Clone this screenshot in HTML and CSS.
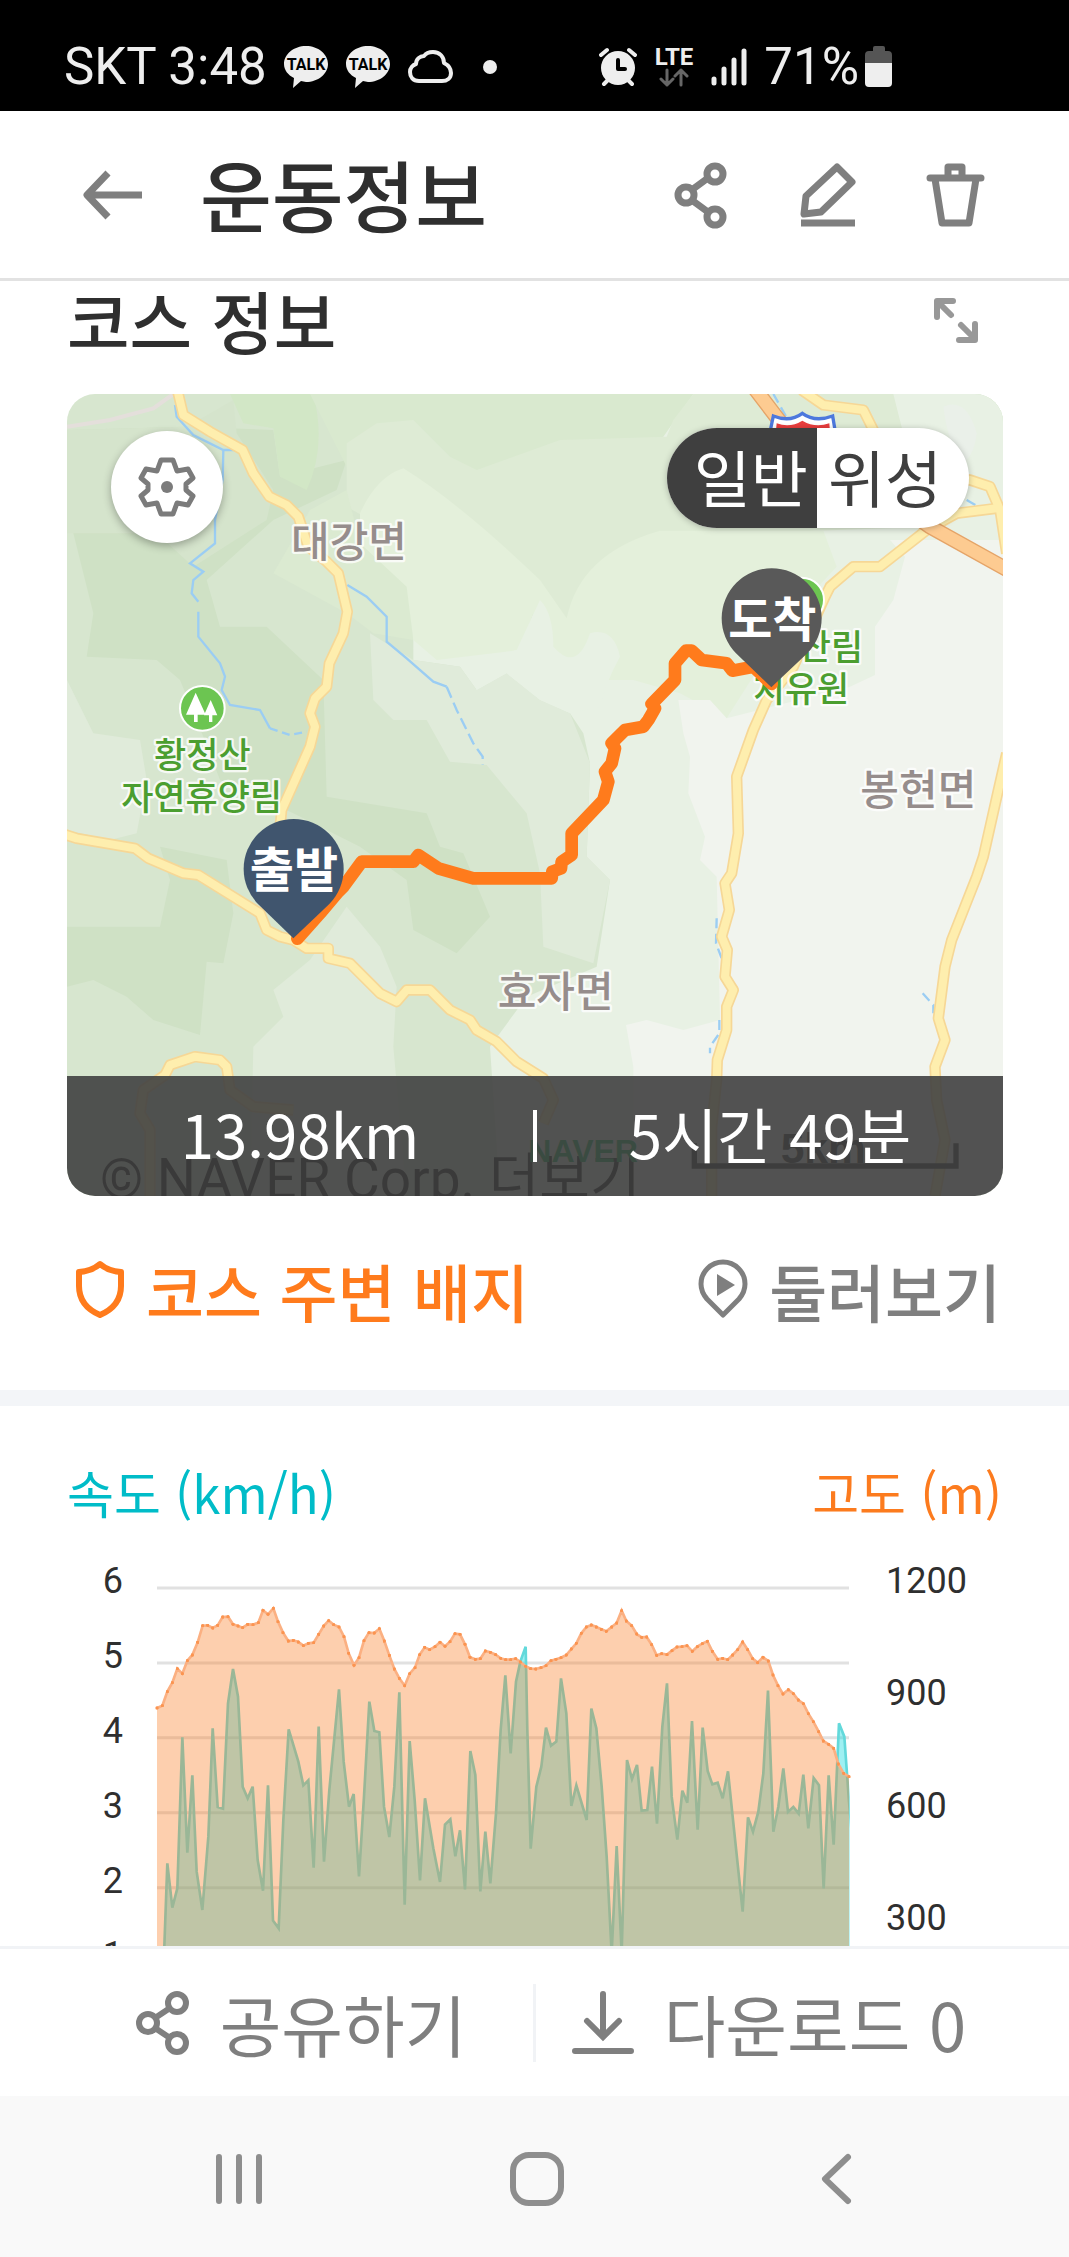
FILE: index.html
```html
<!DOCTYPE html>
<html lang="ko">
<head>
    <meta charset="UTF-8">
    <meta name="viewport" content="width=device-width, initial-scale=1.0">
    <title>운동정보</title>
    <link rel="stylesheet" href="styles.css">
</head>
<body>
    <div class="statusbar">
        <div class="status-group">
            <span>SKT 3:48</span>
            <svg class="talk" width="45" height="42" viewBox="0 0 45 42">
                <path fill="#eee" d="M22 0C34 0 44 8 44 18S34 36 22 36l-5-1-8 7 1-10C4 29 0 24 0 18 0 8 10 0 22 0z"/>
                <text x="22" y="24">TALK</text>
            </svg>
            <svg class="talk" width="45" height="42" viewBox="0 0 45 42">
                <path fill="#eee" d="M22 0C34 0 44 8 44 18S34 36 22 36l-5-1-8 7 1-10C4 29 0 24 0 18 0 8 10 0 22 0z"/>
                <text x="22" y="24">TALK</text>
            </svg>
            <svg width="45" height="34" viewBox="0 0 45 34">
                <path fill="none" stroke="#eee" stroke-width="4" stroke-linejoin="round" d="M11 31C5 31 2 27 2 22c0-4 3-7 6-8 0-5 4-8 8-8C18 3 21 2 25 2c7 0 11 5 11 11 4 2 7 5 7 10s-4 8-9 8z"/>
            </svg>
            <span class="dot"></span>
        </div>
        <div class="status-group">
            <svg width="38" height="40" viewBox="0 0 38 40">
                <path stroke="#eee" stroke-width="4" stroke-linecap="round" d="M2 8l6-5M36 8l-6-5M8 34l-3 3M30 34l3 3"/>
                <circle cx="19" cy="21" r="17" fill="#eee"/>
                <path fill="none" stroke="#000" stroke-width="4" stroke-linecap="round" stroke-linejoin="round" d="M19 13v9h7"/>
            </svg>
            <svg class="lte" width="40" height="40" viewBox="0 0 40 40">
                <text x="20" y="18">LTE</text>
                <path fill="none" stroke="#666" stroke-width="3" stroke-linecap="round" stroke-linejoin="round" d="M13 23v15M7 32l6 6 6-6M27 38V23M21 29l6-6 6 6"/>
            </svg>
            <svg width="36" height="38" viewBox="0 0 36 38">
                <path stroke="#eee" stroke-width="5" stroke-linecap="round" d="M3 31v4M13 21v14M23 12v23M33 3v32"/>
            </svg>
            <span class="battery">
                <span>71%</span>
                <svg width="27" height="41" viewBox="0 0 27 41">
                    <path fill="#555" d="M0 17V9q0-4 4-4h4V2q0-2 2-2h8q2 0 2 2v3h3q4 0 4 4v8z"/>
                    <path fill="#eee" d="M0 17h27v20q0 4-4 4H4q-4 0-4-4z"/>
                </svg>
            </span>
        </div>
    </div>

    <header class="header">
        <button class="icon-button" aria-label="뒤로">
            <svg width="72" height="72" viewBox="0 0 72 72">
                <path d="M66 36H11M32 14L11 36l21 22"/>
            </svg>
        </button>
        <h1>운동정보</h1>
        <div class="header-actions">
            <button class="icon-button" aria-label="공유">
                <svg width="72" height="72" viewBox="0 0 72 72">
                    <circle cx="21" cy="36" r="8"/>
                    <circle cx="50" cy="15" r="8"/>
                    <circle cx="50" cy="58" r="8"/>
                    <path d="M28 30l15-11M28 42l15 11"/>
                </svg>
            </button>
            <button class="icon-button" aria-label="수정">
                <svg width="72" height="72" viewBox="0 0 72 72">
                    <path d="M45 8l15 15-31 30-17 2 2-18z"/>
                    <path d="M9 64h54"/>
                </svg>
            </button>
            <button class="icon-button" aria-label="삭제">
                <svg width="72" height="72" viewBox="0 0 72 72">
                    <path stroke-linecap="round" d="M11 19h51M29 18V8h14v10M16 20l7 44h27l7-44"/>
                </svg>
            </button>
        </div>
    </header>

    <main>
        <section>
            <div class="section-title">
                <h2>코스 정보</h2>
                <button class="icon-button expand" aria-label="확대">
                    <svg width="46" height="46" viewBox="0 0 46 46">
                        <path stroke-linecap="round" d="M4 20V4h16M5 5l13 13M26 43h16V27M41 41L28 28"/>
                    </svg>
                </button>
            </div>

            <div class="map">
                <svg class="map-canvas" viewBox="21 42 2808 2406" preserveAspectRatio="xMidYMid slice">
                    <rect x="21" y="42" width="2808" height="2406" fill="#d7e6cf"/>
                    <!-- terrain -->
                    <path fill="#cfe1c5" d="M21 150L380 140 640 150 660 290 860 240 830 330 640 420 440 600 480 740 620 740 790 900 800 1250 1100 1300 1140 1400 1210 1420 1290 1610 1190 1720 1060 1650 1040 1500 900 1400 700 1300 480 1200 430 1070 360 900 290 840 80 830 100 700 40 460z"/>
                    <path fill="#d5e4cc" d="M21 150L380 140 520 60 530 160 640 330 620 420 400 560 290 460 21 460z"/>
                    <path fill="#cfe1c5" d="M21 1640H300L330 1500 300 1400 500 1440 520 1600 490 1750 440 1745 420 1965 280 1920 200 1850 100 1800 21 1820z"/>
                    <path fill="#e0ebda" d="M21 900L100 1060 240 1080 260 1200 230 1360 150 1380 21 1350z"/>
                    <path fill="#e0ebda" d="M640 1830L750 1740 860 1580 960 1700 1010 1820 1000 2000 1040 2448H570L580 2000 670 1910z"/>
                    <path fill="#d2e7c6" d="M510 42H760Q800 200 740 330L660 290 640 145 550 130z"/>
                    <path fill="#d9e9cf" d="M750 42H2829V600H1400L1250 450 860 260z"/>
                    <path fill="#e8f1e4" d="M1420 700L1380 810 1060 770V840L1200 860 1250 930 1340 880 1440 960 1530 1000 1570 1060 1590 1150 1580 1430 1650 1500 1610 1760 1400 1850 1290 2000 1320 2448H2829V42H1900L1810 170z"/>
                    <path fill="#deebd5" d="M860 380L860 190 950 130 1060 120 1170 230 1250 270 1500 180 1820 170 1840 120 1900 42H2500L2600 440 1800 470 1600 570 1520 715 1250 600z"/>
                    <path fill="#e0ebda" d="M930 760L940 960 1000 1020 1100 1020 1170 1145 1280 1155 1400 1300 1440 1480 1450 1700 1600 1750 1650 1500 1580 1430 1590 1150 1530 1000 1440 960 1340 880 1250 930 1200 860 1060 840z"/>
                    <path fill="#dbead1" d="M640 580L750 390 860 330 900 490 1040 600 1060 780 940 760 860 700z"/>
                    <path fill="#e4f0db" d="M900 400Q950 290 1030 265 1200 370 1440 600L1520 715Q1560 520 1800 452H2290L2330 560 2200 700 2000 1015 1860 940 1720 900 1600 900 1480 860 1420 700 1380 810 1130 840 1060 780 1040 620 900 490z"/>
                    <path fill="#e8f1e4" d="M1440 660Q1480 700 1480 800 1550 880 1590 760 1660 740 1680 830 1640 900 1620 980L1530 1000 1440 960 1340 880 1250 930 1210 840 1370 810z"/>
                    <path fill="#f1f4ee" d="M2829 480H2490L2535 530 2500 660 2445 740V885L2370 920 2000 1015 1950 960 1855 960 1870 1060 1890 1130 1885 1240 1935 1370 1920 1440 1970 1490 1980 1920 1870 1950 1760 1920 1698 1935 1720 2060V2448H2829z"/>
                    <path fill="#eaf0e9" d="M2650 80Q2720 50 2750 160 2740 240 2700 250 2660 170 2650 80z"/>
                    <path fill="none" stroke="#e4dfdb" stroke-width="12" d="M21 140L150 120 280 85 340 42"/>

                    <!-- streams -->
                    <g class="stream">
                        <path d="M345 75L350 110 400 165 490 210H548M490 210L488 300 465 420V490L390 550 430 575 400 600 395 640 415 665M415 695V770L480 850 495 890 485 930 510 975 600 990 630 1045"/>
                        <path stroke-dasharray="24 14" d="M630 1045L690 1065 740 1055"/>
                        <path d="M862 615L920 650 980 710V785L1040 835 1120 905 1160 920"/>
                        <path stroke-dasharray="36 16" d="M1160 920L1190 990 1240 1090 1268 1130V1155"/>
                        <path stroke-dasharray="30 16" d="M1970 1615L1968 1690 1985 1735M1978 1920V1960L1950 2000V2020M2588 1840L2620 1875V1900M2720 360L2790 400M2140 42L2190 130 2260 140"/>
                    </g>

                    <!-- roads: casing first, then the fill over it -->
                    <g class="road">
                        <path id="road1" d="M352 30L370 105 450 155 548 210 580 280 628 350 680 375 715 410 745 500 800 545 835 580 862 695 850 760 808 850 800 920 765 955 750 1000 765 1040 750 1100 665 1290 655 1400"/>
                        <path id="road2" d="M10 1362L50 1375 225 1405 265 1435 370 1480 415 1485 600 1600 620 1650 660 1670 700 1680 740 1705H805V1735L870 1750 960 1840 1010 1865 1040 1830H1110L1170 1890 1230 1920 1250 1950 1310 1985 1370 2045 1450 2095 1480 2160 1450 2230"/>
                        <path id="road3" d="M270 2448V2250L240 2200 250 2130 315 2085 330 2055 405 2030 480 2040 500 2060 510 2130 580 2180 700 2190"/>
                        <path id="road4" d="M1955 2448L1955 2240 1970 2100 1972 2040 2000 1950V1880L2020 1830 1995 1790 2002 1710 1985 1670 2008 1590 1995 1510 2015 1480 2035 1360 2030 1190 2080 1050 2120 960 2200 860 2295 650 2310 620 2380 560H2460L2600 450 2690 400 2810 385"/>
                        <path id="road5" d="M2625 2448L2655 2280 2630 2160 2625 2060 2655 1980 2635 1915 2655 1760 2675 1680 2750 1490 2770 1430 2815 1230 2840 1120"/>
                        <path id="road6" d="M2225 30L2290 75 2410 90 2440 150 2500 280 2730 300 2790 320 2820 390 2840 520"/>
                    </g>
                    <g class="road-fill">
                        <use href="#road1"/><use href="#road2"/><use href="#road3"/>
                        <use href="#road4"/><use href="#road5"/><use href="#road6"/>
                    </g>
                    <path fill="none" stroke="#e5a468" stroke-width="46" d="M2080 20L2160 125 2610 440 2840 568"/>
                    <path fill="none" stroke="#fdcb91" stroke-width="38" d="M2080 20L2160 125 2610 440 2840 568"/>
                    <path fill="#fff" stroke="#4d78dd" stroke-width="10" d="M2140 108Q2190 128 2227 100 2265 128 2318 108L2330 180H2125z"/>
                    <path fill="#e93e3e" d="M2150 130Q2190 145 2227 122 2265 145 2308 130L2312 180H2145z"/>

                    <!-- places -->
                    <g class="place">
                        <text x="867" y="530">대강면</text>
                        <text x="2575" y="1276">봉현면</text>
                        <text x="1487" y="1882">효자면</text>
                    </g>
                    <circle cx="2225" cy="660" r="67" fill="#6cc551" stroke="#fff" stroke-width="6"/>
                    <circle cx="427" cy="985" r="67" fill="#6cc551" stroke="#fff" stroke-width="6"/>
                    <path fill="#fff" d="M407 938l30 66h-24v22h-11v-22h-24zM452 960l20 46h-15v20h-10v-20h-15z"/>
                    <g class="park">
                        <text x="427" y="1163">황정산</text>
                        <text x="425" y="1291">자연휴양림</text>
                        <text x="2313" y="840">산림</text>
                        <text x="2223" y="966">치유원</text>
                    </g>

                    <!-- track -->
                    <path class="track" d="M712 1676L780 1600 835 1535 850 1520 905 1445H1060L1075 1425 1135 1465 1240 1495H1475L1477 1475 1503 1465 1505 1445 1535 1425V1360L1630 1260 1645 1205 1635 1175 1655 1150 1665 1105 1655 1090 1695 1050 1750 1040 1765 1020 1785 985 1775 972 1845 900V850L1878 812H1895L1925 840 2000 850 2017 872 2080 860 2135 912"/>
                    <path fill="#40556e" d="M700 1675L594 1572A150 150 0 1 1 808 1572z"/>
                    <path fill="#595959" d="M2134 922L2028 820A150 150 0 1 1 2242 820z"/>
                    <g class="pin-label">
                        <text x="702" y="1520">출발</text>
                        <text x="2137" y="770">도착</text>
                    </g>

                    <text class="copyright" x="120" y="2455">© NAVER Corp. 더보기</text>
                    <text class="naver" x="1405" y="2345">NAVER</text>
                    <path fill="none" stroke="#222" stroke-width="16" d="M1903 2290V2358H2688V2290"/>
                    <text class="scale" x="2290" y="2350">5km</text>
                </svg>

                <button class="map-settings" aria-label="지도 설정">
                    <svg width="64" height="64" viewBox="0 0 64 64">
                        <path fill="none" stroke="#7b7b7b" stroke-width="5" stroke-linejoin="round" d="M26 5h12l4 11 11-2 5 9-7 6v6l7 6-5 9-11-2-4 11H26l-4-11-11 2-5-9 7-6v-6l-7-6 5-9 11 2z"/>
                        <circle cx="32" cy="32" r="6" fill="#7b7b7b"/>
                    </svg>
                </button>
                <div class="map-type">
                    <button class="active">일반</button>
                    <button>위성</button>
                </div>
                <div class="map-summary">
                    <span>13.98km</span>
                    <i></i>
                    <span>5시간 49분</span>
                </div>
            </div>

            <div class="course-links">
                <a class="badge-link" href="#">
                    <svg width="52" height="60" viewBox="0 0 52 60">
                        <path fill="none" stroke="currentColor" stroke-width="6" stroke-linejoin="round" d="M26 5q8 7 21 8v14q0 20-21 29Q5 47 5 27V13q13-1 21-8z"/>
                    </svg>
                    코스 주변 배지
                </a>
                <a href="#">
                    <svg width="52" height="60" viewBox="0 0 52 60">
                        <path fill="none" stroke="currentColor" stroke-width="5" stroke-linejoin="round" d="M26 56L10 40Q4 33 4 25a22 22 0 0 1 44 0q0 8-6 15z"/>
                        <path fill="currentColor" d="M20 15l18 11-18 11z"/>
                    </svg>
                    둘러보기
                </a>
            </div>
        </section>

        <section class="chart-section">
            <div class="chart-titles">
                <span class="speed">속도 (km/h)</span>
                <span class="altitude">고도 (m)</span>
            </div>
            <div class="chart">
                <div class="axis axis-left">
                    <span>6</span><span>5</span><span>4</span><span>3</span><span>2</span><span>1</span><span>0</span>
                </div>
                <svg class="plot" viewBox="51 54 2076 1348">
                    <defs>
                        <marker id="dot" markerWidth="10" markerHeight="10" refX="5" refY="5" markerUnits="userSpaceOnUse">
                            <circle cx="5" cy="5" r="5" fill="#fb9450"/>
                        </marker>
                        <clipPath id="plot-area">
                            <rect x="51" y="54" width="2078" height="1348"/>
                        </clipPath>
                    </defs>
                    <path stroke="#e1e1e1" stroke-width="9" d="M51 54H2127M51 279H2127M51 503H2127M51 728H2127M51 953H2127M51 1177H2127M51 1402H2127"/>
                    <path class="speed-area" clip-path="url(#plot-area)" d="M66 1402L73 1128 82 880 97 1013 112 955 127 502 142 848 157 616 170 905 187 1020 205 800 218 475 233 711 249 716 264 400 279 297 294 380 308 650 323 685 338 650 353 870 369 962 384 646 399 1052 416 1075 430 750 446 478 475 575 490 646 505 631 521 893 536 470 552 875 568 660 597 358 611 575 627 710 641 672 657 919 672 680 688 395 703 483 718 487 732 710 748 801 763 650 778 367 794 1004 809 513 824 690 840 931 855 685 880 835 900 936 915 764 931 748 946 859 960 781 975 958 991 543 1006 615 1021 964 1036 785 1051 940 1068 730 1082 480 1096 316 1112 550 1128 335 1141 275 1157 230 1162 480 1172 836 1189 650 1204 590 1218 473 1233 527 1249 515 1263 325 1279 430 1294 708 1309 646 1340 750 1354 416 1369 475 1385 650 1400 860 1415 1150 1430 828 1445 1150 1461 570 1476 627 1491 585 1505 722 1522 720 1536 590 1551 761 1567 470 1581 340 1595 680 1612 809 1627 662 1642 698 1656 453 1673 779 1688 473 1703 603 1717 643 1733 638 1748 685 1764 604 1778 740 1808 1025 1824 742 1839 785 1855 725 1870 610 1884 362 1900 785 1915 710 1930 595 1944 726 1960 711 1976 731 1990 614 2005 775 2021 624 2037 646 2051 955 2066 616 2081 824 2097 460 2113 500 2127 695 2145 900V1402"/>
                    <path class="altitude-area" d="M51 1402V414L67 407 82 365 97 338 112 296 127 311 142 272 157 255 173 217 188 167 203 166 218 174 233 166 248 141 264 140 279 163 294 168 308 173 323 163 339 164 355 158 369 121 384 133 400 115 414 155 429 188 445 213 460 211 475 216 490 227 505 220 521 218 536 193 551 168 566 152 581 164 597 171 612 200 626 250 642 286 657 263 672 212 687 188 703 189 718 176 733 213 748 256 763 297 778 325 794 347 809 311 825 293 839 254 854 232 869 239 885 230 900 217 915 229 930 215 945 191 960 193 975 223 990 262 1006 268 1021 266 1036 243 1051 247 1067 254 1082 265 1097 269 1112 269 1127 266 1141 276 1157 289 1172 296 1187 297 1203 293 1218 287 1233 272 1248 268 1263 263 1279 255 1294 237 1309 220 1324 190 1339 171 1354 165 1369 171 1384 178 1399 184 1415 171 1430 159 1445 122 1459 153 1475 167 1490 192 1505 202 1520 201 1535 224 1550 256 1565 251 1581 254 1596 242 1611 231 1626 230 1641 227 1657 244 1672 230 1687 221 1702 214 1717 244 1733 268 1748 265 1763 269 1778 255 1793 239 1808 216 1823 239 1838 266 1853 278 1869 262 1885 273 1899 315 1914 347 1929 372 1945 359 1960 371 1975 390 1990 401 2005 431 2020 455 2036 485 2050 513 2066 523 2081 535 2095 582 2111 610 2127 620V1402z"/>
                    <path class="altitude-line" d="M51 414L67 407 82 365 97 338 112 296 127 311 142 272 157 255 173 217 188 167 203 166 218 174 233 166 248 141 264 140 279 163 294 168 308 173 323 163 339 164 355 158 369 121 384 133 400 115 414 155 429 188 445 213 460 211 475 216 490 227 505 220 521 218 536 193 551 168 566 152 581 164 597 171 612 200 626 250 642 286 657 263 672 212 687 188 703 189 718 176 733 213 748 256 763 297 778 325 794 347 809 311 825 293 839 254 854 232 869 239 885 230 900 217 915 229 930 215 945 191 960 193 975 223 990 262 1006 268 1021 266 1036 243 1051 247 1067 254 1082 265 1097 269 1112 269 1127 266 1141 276 1157 289 1172 296 1187 297 1203 293 1218 287 1233 272 1248 268 1263 263 1279 255 1294 237 1309 220 1324 190 1339 171 1354 165 1369 171 1384 178 1399 184 1415 171 1430 159 1445 122 1459 153 1475 167 1490 192 1505 202 1520 201 1535 224 1550 256 1565 251 1581 254 1596 242 1611 231 1626 230 1641 227 1657 244 1672 230 1687 221 1702 214 1717 244 1733 268 1748 265 1763 269 1778 255 1793 239 1808 216 1823 239 1838 266 1853 278 1869 262 1885 273 1899 315 1914 347 1929 372 1945 359 1960 371 1975 390 1990 401 2005 431 2020 455 2036 485 2050 513 2066 523 2081 535 2095 582 2111 610 2127 620"/>
                </svg>
                <div class="axis axis-right">
                    <span>1200</span><span>900</span><span>600</span><span>300</span><span>0</span>
                </div>
            </div>
        </section>
    </main>

    <footer class="actions">
        <button>
            <svg width="56" height="64" viewBox="0 0 56 64">
                <circle cx="14" cy="32" r="9"/>
                <circle cx="43" cy="12" r="9"/>
                <circle cx="43" cy="52" r="9"/>
                <path d="M21 27l15-10M21 37l15 10"/>
            </svg>
            공유하기
        </button>
        <button>
            <svg width="62" height="64" viewBox="0 0 62 64">
                <path stroke-linecap="round" d="M31 3v42M15 30l16 16 16-16M3 60h56"/>
            </svg>
            다운로드 0
        </button>
    </footer>

    <nav class="navbar">
        <button aria-label="최근 앱">
            <svg width="56" height="56" viewBox="0 0 56 56"><path d="M8 6v44M28 6v44M48 6v44"/></svg>
        </button>
        <button aria-label="홈">
            <svg width="56" height="56" viewBox="0 0 56 56"><rect x="4" y="4" width="48" height="48" rx="16"/></svg>
        </button>
        <button aria-label="뒤로 가기">
            <svg width="56" height="56" viewBox="0 0 56 56"><path d="M40 6L17 28l23 22"/></svg>
        </button>
    </nav>
</body>
</html>
```
FILE: styles.css
```css
* {
    box-sizing: border-box;
}
body {
    display: flex;
    flex-direction: column;
    height: 100vh;
    margin: 0;
    overflow: hidden;
    background-color: #fff;
    color: #2f2f2f;
    font-family: 'Noto Sans CJK KR', sans-serif;
}
svg {
    display: block;
    flex-shrink: 0;
}
h1, h2 {
    margin: 0;
    font-weight: 500;
}
button {
    padding: 0;
    border: none;
    background: none;
    font-family: inherit;
    color: inherit;
    cursor: pointer;
}
a {
    color: inherit;
    text-decoration: none;
}

/* status bar */
.statusbar {
    display: flex;
    justify-content: space-between;
    align-items: center;
    flex-shrink: 0;
    height: 111px;
    padding: 22px 177px 0 64px;
    background-color: #000;
    color: #eee;
    font-family: Roboto, sans-serif;
    font-size: 51px;
}
.status-group {
    display: flex;
    align-items: center;
    gap: 17px;
}
.talk text {
    font: bold 16px Roboto, sans-serif;
    text-anchor: middle;
}
.lte text {
    font: bold 24px Roboto, sans-serif;
    text-anchor: middle;
    fill: #eee;
}
.dot {
    width: 14px;
    height: 14px;
    margin-left: 13px;
    border-radius: 50%;
    background-color: #eee;
}
.battery {
    display: flex;
    align-items: center;
    gap: 6px;
}

/* header */
.header {
    display: flex;
    align-items: center;
    flex-shrink: 0;
    height: 170px;
    padding: 0 78px 0 76px;
    border-bottom: 3px solid #e2e2e2;
}
.header h1 {
    margin: 0 0 4px 52px;
    font-size: 78px;
    line-height: 84px;
}
.header-actions {
    display: flex;
    gap: 55px;
    margin-left: auto;
}
.icon-button svg {
    fill: none;
    stroke: #7f7f7f;
    stroke-width: 7;
    stroke-linejoin: round;
}

main {
    flex: 1;
    min-height: 0;
    overflow: hidden;
}
.section-title {
    display: flex;
    justify-content: space-between;
    align-items: center;
    padding: 0 90px 0 67px;
}
.section-title h2 {
    font-size: 68px;
    line-height: 78px;
}
.section-title .expand svg {
    stroke: #989898;
    stroke-width: 6;
}

/* map */
.map {
    position: relative;
    aspect-ratio: 936 / 802;
    margin: 35px 66px 0 67px;
    border-radius: 28px;
    overflow: hidden;
}
.map-canvas {
    width: 100%;
    height: 100%;
}
.stream path {
    fill: none;
    stroke: #9bcdf3;
    stroke-width: 7;
}
.road {
    fill: none;
    stroke: #f6d796;
    stroke-width: 34;
    stroke-linejoin: round;
}
.road-fill {
    fill: none;
    stroke: #feeeae;
    stroke-width: 24;
    stroke-linejoin: round;
}
.map-canvas text {
    font-weight: 500;
    text-anchor: middle;
}
.map-canvas .place text,
.map-canvas .park text {
    stroke: #fff;
    stroke-opacity: 0.8;
    stroke-width: 14;
    stroke-linejoin: round;
    paint-order: stroke;
}
.map-canvas .place text {
    font-size: 126px;
    fill: #968d8c;
}
.map-canvas .park text {
    font-size: 105px;
    fill: #4b9e30;
}
.map-canvas .pin-label text {
    font-size: 144px;
    font-weight: bold;
    fill: #fff;
}
.track {
    fill: none;
    stroke: #ff7b1c;
    stroke-width: 38;
    stroke-linecap: round;
    stroke-linejoin: round;
}
.map-canvas .copyright {
    font-family: Roboto, 'Noto Sans CJK KR', sans-serif;
    font-size: 165px;
    font-weight: 400;
    text-anchor: start;
}
.map-canvas .naver {
    font-family: 'Liberation Sans', sans-serif;
    font-size: 96px;
    font-weight: bold;
    text-anchor: start;
    fill: #00a848;
}
.map-canvas .scale {
    font-family: 'Liberation Sans', sans-serif;
    font-size: 128px;
    font-weight: bold;
    fill: #222;
}
.map-settings {
    position: absolute;
    top: 37px;
    left: 44px;
    display: flex;
    justify-content: center;
    align-items: center;
    width: 112px;
    height: 112px;
    border-radius: 50%;
    background-color: #fff;
    box-shadow: 0 3px 8px rgba(0, 0, 0, 0.3);
}
.map-type {
    position: absolute;
    top: 34px;
    right: 34px;
    display: flex;
    height: 100px;
    border-radius: 50px;
    background-color: #fff;
    box-shadow: 0 1px 6px rgba(0, 0, 0, 0.25);
    overflow: hidden;
}
.map-type button {
    padding: 0 27px 4px 11px;
    font-size: 62px;
    line-height: 92px;
    color: #3f3f3f;
}
.map-type .active {
    padding: 0 9px 4px 27px;
    background-color: #3f3f3f;
    color: #fff;
}
.map-summary {
    position: absolute;
    right: 0;
    bottom: 0;
    left: 0;
    display: grid;
    grid-template-columns: 1fr 4px 1fr;
    align-items: center;
    height: 120px;
    background-color: rgba(64, 64, 64, 0.9);
    color: #fff;
    font-size: 60px;
    text-align: center;
}
.map-summary span {
    padding-bottom: 8px;
}
.map-summary i {
    height: 52px;
    background-color: #fff;
}

/* links under the map */
.course-links {
    display: flex;
    justify-content: space-between;
    align-items: center;
    height: 194px;
    padding: 0 68px 8px 74px;
}
.course-links a {
    display: flex;
    align-items: center;
    gap: 20px;
    font-size: 63px;
    font-weight: 500;
    color: #7f7f7f;
}
.course-links .badge-link {
    color: #ff7b1c;
}

/* speed and altitude */
.chart-section {
    padding-top: 48px;
    border-top: 16px solid #f3f5f8;
}
.chart-titles {
    display: flex;
    justify-content: space-between;
    padding: 0 67px;
    font-size: 51px;
    line-height: 76px;
}
.speed {
    color: #00bcc8;
}
.altitude {
    color: #fc7b1e;
}
.chart {
    display: flex;
    margin-top: 58px;
    padding: 0 101px 0 67px;
}
.axis {
    display: flex;
    flex-direction: column;
    justify-content: space-between;
    margin: -25px 0 -11px;
    font-family: Roboto, sans-serif;
    font-size: 36px;
    line-height: 36px;
}
.axis-left {
    width: 56px;
    text-align: right;
}
.axis-right {
    width: 82px;
}
.plot {
    flex: 1;
    min-width: 0;
    margin: 0 37px 0 34px;
    overflow: visible;
}
.speed-area {
    fill: rgba(0, 215, 220, 0.38);
    stroke: #63d9db;
    stroke-width: 8;
}
.altitude-area {
    fill: rgba(250, 125, 36, 0.37);
}
.altitude-line {
    fill: none;
    stroke: #fbb082;
    stroke-width: 8;
    marker-start: url(#dot);
    marker-mid: url(#dot);
    marker-end: url(#dot);
}

/* bottom bars */
.actions {
    display: flex;
    align-items: center;
    flex-shrink: 0;
    height: 150px;
    padding: 0 67px;
    border-top: 3px solid #f1f3f6;
}
.actions button {
    display: flex;
    flex: 1;
    justify-content: center;
    align-items: center;
    gap: 30px;
    height: 78px;
    font-size: 67px;
    line-height: 78px;
    color: #7f7f7f;
}
.actions button + button {
    border-left: 3px solid #f1f3f6;
}
.actions svg {
    fill: none;
    stroke: #7f7f7f;
    stroke-width: 6;
}
.navbar {
    display: grid;
    grid-template-columns: repeat(3, 1fr);
    align-items: center;
    justify-items: center;
    flex-shrink: 0;
    height: 161px;
    padding: 4px 84px 0 90px;
    background-color: #f9f9f9;
}
.navbar svg {
    fill: none;
    stroke: #8e8e8e;
    stroke-width: 6;
    stroke-linecap: round;
    stroke-linejoin: round;
}
```
